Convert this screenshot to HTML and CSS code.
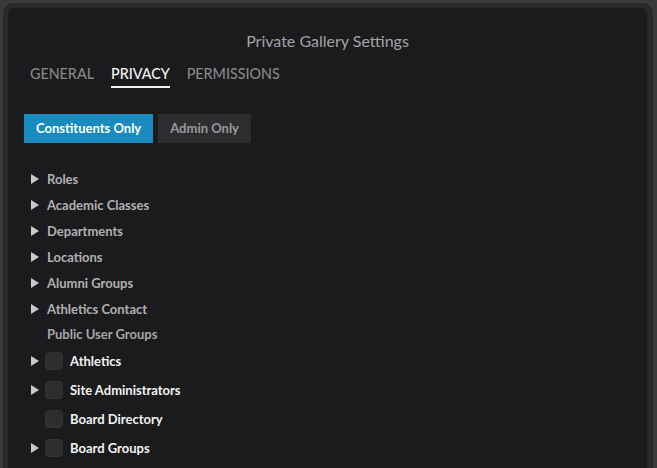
FILE: index.html
```html
<!DOCTYPE html>
<html>
<head>
<meta charset="utf-8">
<link rel="stylesheet" href="styles.css">
</head>
<body>
<div class="frame">
  <div class="dialog">
    <h1 class="title">Private Gallery Settings</h1>
    <nav class="tabs">
      <span class="tab">GENERAL</span>
      <span class="tab active">PRIVACY</span>
      <span class="tab">PERMISSIONS</span>
    </nav>
    <div class="toggle">
      <span class="btn primary">Constituents Only</span>
      <span class="btn">Admin Only</span>
    </div>
    <ul class="tree">
      <li class="row"><span class="caret"></span><span class="label">Roles</span></li>
      <li class="row"><span class="caret"></span><span class="label">Academic Classes</span></li>
      <li class="row"><span class="caret"></span><span class="label">Departments</span></li>
      <li class="row"><span class="caret"></span><span class="label">Locations</span></li>
      <li class="row"><span class="caret"></span><span class="label">Alumni Groups</span></li>
      <li class="row"><span class="caret"></span><span class="label">Athletics Contact</span></li>
      <li class="row header"><span class="caret none"></span><span class="label">Public User Groups</span></li>
      <li class="row check"><span class="caret"></span><span class="box"></span><span class="label">Athletics</span></li>
      <li class="row check"><span class="caret"></span><span class="box"></span><span class="label">Site Administrators</span></li>
      <li class="row check"><span class="caret none"></span><span class="box"></span><span class="label">Board Directory</span></li>
      <li class="row check"><span class="caret"></span><span class="box"></span><span class="label">Board Groups</span></li>
    </ul>
  </div>
</div>
</body>
</html>
```
FILE: styles.css
```css
html, body {
  margin: 0;
  padding: 0;
  height: 100%;
  overflow: hidden;
}
body {
  background: #3a3a3b;
  font-family: Lato, "Open Sans", sans-serif;
}
.frame {
  margin: 3px 4px 0 3px;
  padding: 5px 6px 0 5px;
  background: #29292c;
  border-radius: 10px 10px 0 0;
  height: 100%;
  box-sizing: border-box;
}
.dialog {
  background: #1b1b1d;
  border-radius: 7px 7px 0 0;
  height: 100%;
  padding: 24px 16px 0 16px;
  box-sizing: border-box;
}
.title {
  margin: 0;
  font-size: 16px;
  line-height: 18px;
  font-weight: 400;
  color: #a3a3a5;
  text-align: center;
}
.tabs {
  display: flex;
  gap: 17px;
  margin: 15px 0 0 6px;
}
.tab {
  font-size: 14.3px;
  line-height: 18px;
  font-weight: 500;
  color: #87878a;
  padding-bottom: 3px;
  border-bottom: 2px solid transparent;
}
.tab.active {
  color: #f4f4f4;
  border-bottom-color: #f4f4f4;
}
.toggle {
  display: flex;
  gap: 5px;
  margin-top: 26px;
}
.btn {
  height: 29px;
  line-height: 29px;
  padding: 0 12px;
  font-size: 13px;
  font-weight: 700;
  color: #9a9a9c;
  background: #2d2d30;
}
.btn.primary {
  background: #1a8bbf;
  color: #ffffff;
}
.tree {
  list-style: none;
  margin: 23px 0 0 0;
  padding: 0 0 0 7px;
}
.row {
  display: flex;
  align-items: center;
  height: 26px;
  font-size: 13px;
  font-weight: 700;
  color: #b1b1b3;
}
.caret {
  width: 0;
  height: 0;
  border-left: 8px solid #c9c9cb;
  border-top: 5px solid transparent;
  border-bottom: 5px solid transparent;
  margin-right: 8px;
}
.caret.none {
  border-left-color: transparent;
}
.row.header {
  height: 24px;
  color: #a6a6a8;
}
.row.check {
  height: 29px;
  color: #f2f2f2;
}
.row.check .caret {
  margin-right: 6px;
}
.box {
  width: 18px;
  height: 18px;
  border-radius: 4px;
  background: #2e2e31;
  margin-right: 7px;
  box-sizing: border-box;
  border: 1px solid #333336;
}
```
